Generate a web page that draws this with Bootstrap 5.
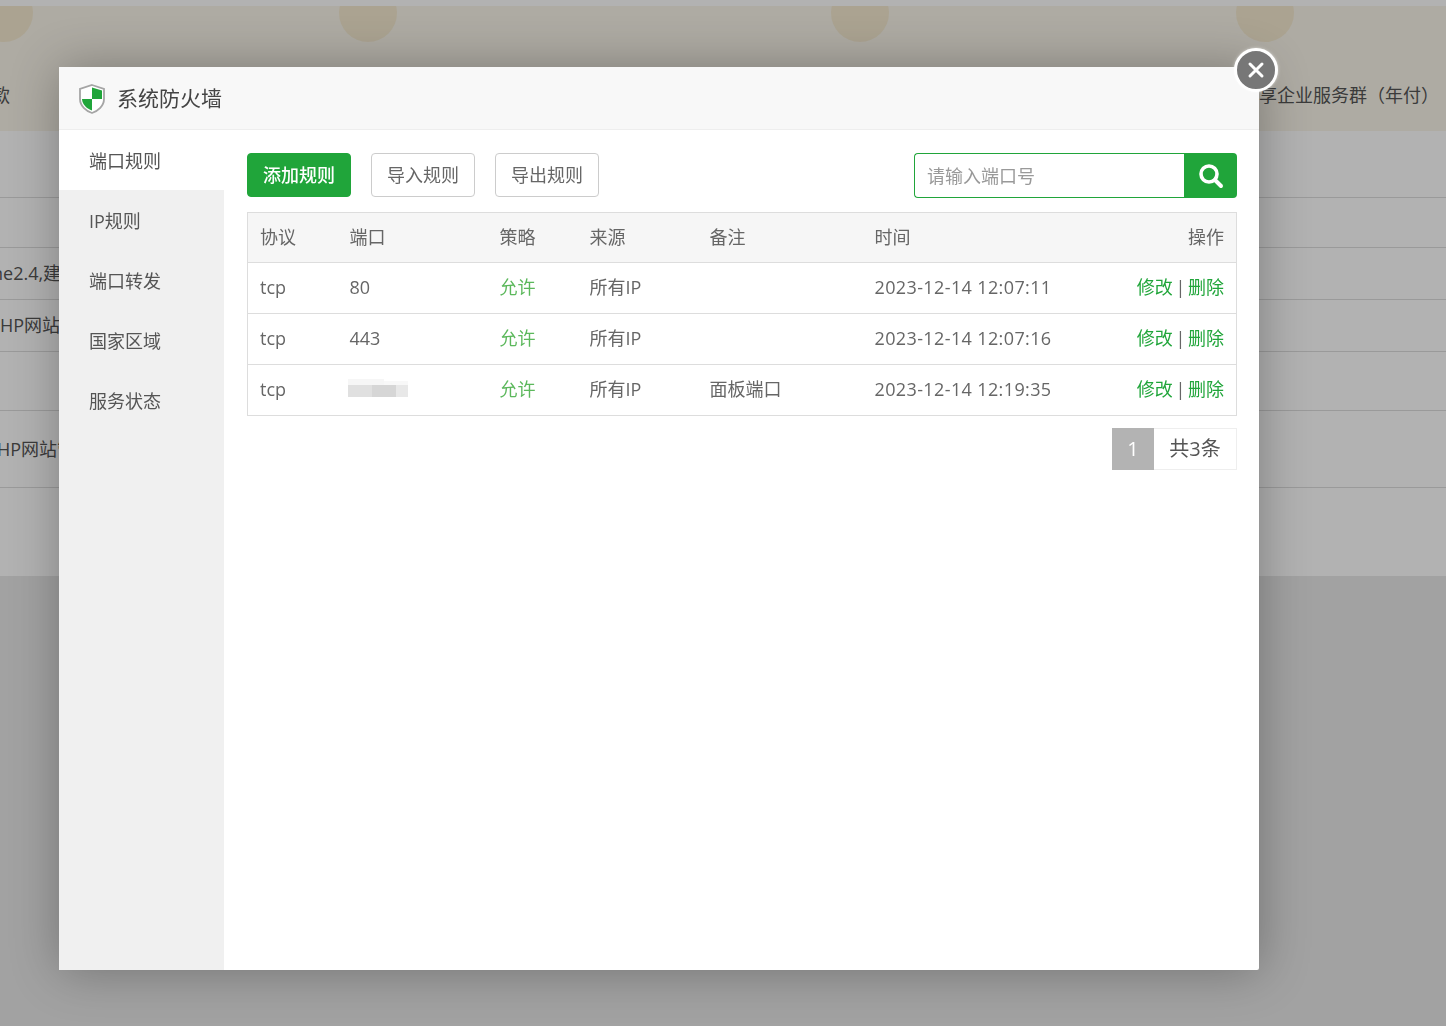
<!DOCTYPE html>
<html lang="zh-CN">
<head>
<meta charset="utf-8">
<title>系统防火墙</title>
<link href="https://cdn.jsdelivr.net/npm/bootstrap@5.3.0/dist/css/bootstrap.min.css" rel="stylesheet">
<style>
html,body{height:100%;overflow:hidden}
body{background:#e8e8e8;font-family:"Open Sans","Noto Sans CJK SC",sans-serif;font-size:18px;color:#555}
.bg-page{height:1026px;position:relative;overflow:hidden}
.bg-top{height:6px;background:#fff}
.bg-banner{height:125px;background:#f9f5ea;position:relative;overflow:hidden}
.bg-disc{position:absolute;top:-22px;width:58px;height:58px;border-radius:50%;background:#f5ead0}
.bg-banner-txt{position:absolute;top:75px;white-space:nowrap;color:#555;line-height:28px}
.bg-list{height:445px;background:#fff}
.bg-row{border-bottom:1px solid #ddd;white-space:nowrap;display:flex;align-items:center;overflow:hidden}
.bg-row span{display:block}
.dim{position:fixed;inset:0;background:rgba(0,0,0,.3)}
.fw-modal{position:absolute;left:59px;top:67px;width:1200px;height:903px;background:#fff;border-radius:2px;box-shadow:1px 1px 50px rgba(0,0,0,.3);display:flex;flex-direction:column}
.fw-head{height:63px;flex:none;background:#f8f8f8;border-bottom:1px solid #eee;display:flex;align-items:center;padding-left:20px;padding-top:2px;gap:12px;font-size:21px;color:#444}
.fw-close{position:absolute;left:1175px;top:-19px;width:44px;height:44px;border-radius:50%;background:#777;border:3px solid #fff;padding:0;display:flex;align-items:center;justify-content:center;box-shadow:0 0 3px rgba(255,255,255,.6)}
.fw-body{flex:1;display:flex;min-height:0}
.fw-side{width:165px;flex:none;background:#f0f0f0;list-style:none;margin:0;padding:0}
.fw-side li{height:60px;line-height:62px;padding-left:30px;color:#555}
.fw-side li.on{background:#fff}
.fw-main{flex:1;padding:23px 22px 0 23px;min-width:0}
.fw-bar{display:flex;gap:20px;align-items:flex-start;margin-bottom:14px}
.fw-btn{width:104px;height:44px;border-radius:4px;font-size:18px;padding:0;line-height:42px;border:1px solid #ccc;background:#fff;color:#666}
.fw-btn.fw-green{background:#20a53a;border-color:#20a53a;color:#fff;font-weight:500}
.fw-search{margin-left:auto;display:flex;width:323px;height:45px}
.fw-search input{width:270px;flex:none;height:45px;border:1px solid #20a53a;border-right:0;border-radius:4px 0 0 4px;padding:0 12px;font-size:18px;outline:0;color:#555;font-family:inherit;background:#fff}
.fw-search input::placeholder{color:#999}
.fw-search button{flex:1;background:#20a53a;border:0;border-radius:0 4px 4px 0;padding:0;display:flex;align-items:center;justify-content:center}
.fw-table{width:990px;table-layout:fixed;border-collapse:collapse;margin:0;border:1px solid #ddd;color:#666}
.fw-table th,.fw-table td{height:51px;padding:0 12px;border-bottom:1px solid #ddd;font-weight:400;font-size:18px;vertical-align:middle;white-space:nowrap;background:#fff;color:#666;box-shadow:none}
.fw-table td{padding-bottom:2px}
.fw-table thead th{background:#f6f6f6;height:50px}
.c1{width:90px}.c2{width:150px}.c3{width:90px}.c4{width:120px}.c5{width:165px}.c6{width:230px}
.fw-table td.fw-ok{color:#5cb85c}
.fw-table .fw-act{text-align:right;padding-left:0;word-spacing:-2px}
.fw-act a{color:#20a53a;text-decoration:none}
.fw-date{letter-spacing:.38px}
.fw-pager{display:flex;justify-content:flex-end;margin-top:12px;height:42px}
.fw-cur{width:42px;background:#b3b3b3;color:#fff;display:flex;align-items:center;justify-content:center;font-size:20px}
.fw-total{width:83px;border:1px solid #eee;border-left:0;color:#555;display:flex;align-items:center;justify-content:center;font-size:20px}
.fw-blur{display:block;margin:-3px 0 0 -2px}
</style>
</head>
<body>
<div class="bg-page">
  <div class="bg-top"></div>
  <div class="bg-banner">
    <i class="bg-disc" style="left:-25px"></i>
    <i class="bg-disc" style="left:339px"></i>
    <i class="bg-disc" style="left:831px"></i>
    <i class="bg-disc" style="left:1236px"></i>
    <span class="bg-banner-txt" style="left:-8px">款</span>
    <span class="bg-banner-txt" style="left:1259px">享企业服务群（年付）</span>
  </div>
  <div class="bg-list">
    <div class="bg-row" style="height:67px"></div>
    <div class="bg-row" style="height:50px"></div>
    <div class="bg-row" style="height:52px"><span style="margin-left:-8px">ne2.4,建</span></div>
    <div class="bg-row" style="height:52px"><span>HP网站</span></div>
    <div class="bg-row" style="height:59px"></div>
    <div class="bg-row" style="height:77px"><span style="margin-left:-3px">HP网站管</span></div>
  </div>
</div>
<div class="dim"></div>

<div class="fw-modal">
  <div class="fw-head">
    <svg width="26" height="30" viewBox="0 0 26 30" aria-hidden="true">
      <path d="M13 1 L25 5 V15 C25 22 19 27 13 29 C7 27 1 22 1 15 V5 Z" fill="#fff" stroke="#a5a5a5" stroke-width="1.8"/>
      <path d="M13 3.5 L23 6.5 V15 H13 Z" fill="#20a53a"/>
      <path d="M3 15 H13 V26.6 C8 24.8 3.4 21 3 15 Z" fill="#20a53a"/>
    </svg>
    <span>系统防火墙</span>
  </div>
  <button class="fw-close" type="button" aria-label="关闭">
    <svg width="18" height="18" viewBox="0 0 18 18"><path d="M3 3 L15 15 M15 3 L3 15" stroke="#fff" stroke-width="3" stroke-linecap="round"/></svg>
  </button>
  <div class="fw-body">
    <ul class="fw-side">
      <li class="on">端口规则</li>
      <li>IP规则</li>
      <li>端口转发</li>
      <li>国家区域</li>
      <li>服务状态</li>
    </ul>
    <div class="fw-main">
      <div class="fw-bar">
        <button class="btn fw-btn fw-green" type="button">添加规则</button>
        <button class="btn fw-btn" type="button">导入规则</button>
        <button class="btn fw-btn" type="button">导出规则</button>
        <div class="fw-search">
          <input type="text" placeholder="请输入端口号">
          <button type="button" aria-label="搜索">
            <svg width="26" height="26" viewBox="0 0 26 26"><circle cx="11" cy="11" r="8" fill="none" stroke="#fff" stroke-width="3.6"/><path d="M17 17 L23 23" stroke="#fff" stroke-width="4" stroke-linecap="round"/></svg>
          </button>
        </div>
      </div>
      <table class="table fw-table">
        <colgroup><col class="c1"><col class="c2"><col class="c3"><col class="c4"><col class="c5"><col class="c6"><col></colgroup>
        <thead>
          <tr><th>协议</th><th>端口</th><th>策略</th><th>来源</th><th>备注</th><th>时间</th><th class="fw-act">操作</th></tr>
        </thead>
        <tbody>
          <tr><td>tcp</td><td>80</td><td class="fw-ok">允许</td><td>所有IP</td><td></td><td class="fw-date">2023-12-14 12:07:11</td><td class="fw-act"><a href="#">修改</a> | <a href="#">删除</a></td></tr>
          <tr><td>tcp</td><td>443</td><td class="fw-ok">允许</td><td>所有IP</td><td></td><td class="fw-date">2023-12-14 12:07:16</td><td class="fw-act"><a href="#">修改</a> | <a href="#">删除</a></td></tr>
          <tr><td>tcp</td><td><svg class="fw-blur" width="60" height="18" viewBox="0 0 60 18" aria-hidden="true"><rect x="0" y="0" width="36" height="6" fill="#f6f6f6"/><rect x="36" y="2" width="24" height="4" fill="#f8f8f8"/><rect x="0" y="6" width="24" height="12" fill="#e0e0e0"/><rect x="24" y="6" width="24" height="12" fill="#d6d6d6"/><rect x="48" y="6" width="12" height="12" fill="#e8e8e8"/></svg></td><td class="fw-ok">允许</td><td>所有IP</td><td>面板端口</td><td class="fw-date">2023-12-14 12:19:35</td><td class="fw-act"><a href="#">修改</a> | <a href="#">删除</a></td></tr>
        </tbody>
      </table>
      <div class="fw-pager"><span class="fw-cur">1</span><span class="fw-total">共3条</span></div>
    </div>
  </div>
</div>
</body>
</html>
